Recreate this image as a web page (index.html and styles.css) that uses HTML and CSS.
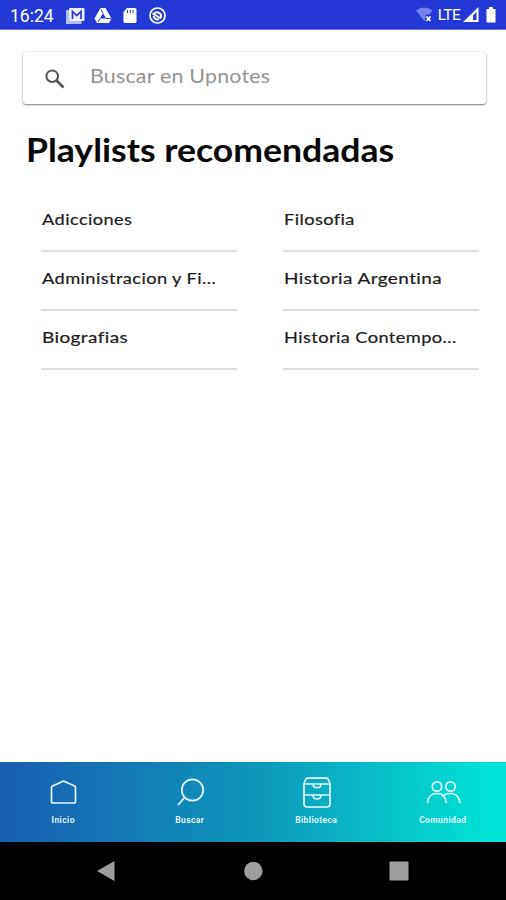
FILE: index.html
```html
<!DOCTYPE html>
<html lang="es">
<head>
<meta charset="utf-8">
<title>Upnotes</title>
<link rel="stylesheet" href="styles.css">
</head>
<body>
<div class="screen">
  <header class="status">
    <span class="clock">16:24</span>
    <svg class="status-left" width="104" height="20" viewBox="0 0 104 20">
      <path d="M2.500 4v12.500h14" fill="none" stroke="#b4bcf8" stroke-width="3"/>
      <rect x="4" y="2" width="15.500" height="13" rx="1" fill="#eef0ff"/>
      <path d="M7.500 13V5.500l4.300 4L16 5.500V13" fill="none" stroke="#2438d8" stroke-width="1.700"/>
      <path d="M35.500 2h5l6 10.500-2.500 4.500H32l-2.500-4.500z" fill="#fff"/>
      <path d="M38 7l3 5.500h-6z" fill="#2438d8"/>
      <path d="M38 7l-2-3.500M41 12.500h5M35 12.500l-2 3.500" stroke="#2438d8" stroke-width="1"/>
      <path d="M62 2h8q1.500 0 1.500 1.500v12q0 1.500-1.500 1.500H60q-1.500 0-1.500-1.500V6z" fill="#fff"/>
      <path d="M62.500 4v3M65.300 4v3M68.100 4v3" stroke="#2438d8" stroke-width="1"/>
      <circle cx="92.500" cy="9.500" r="7.500" fill="none" stroke="#fff" stroke-width="1.700"/>
      <path d="M89 7.500a4.200 4.200 0 0 1 7 4M88.500 10a4.200 4.200 0 0 0 5.500 3.300M87.500 7.500l8.500 5" fill="none" stroke="#fff" stroke-width="1.900"/>
    </svg>
    <svg class="wifi" width="20" height="18" viewBox="0 0 20 18">
      <path d="M1 4.500q8-6 16.500 0L9.300 15z" fill="#7882ec"/>
      <path d="M10.500 8.500h8V17h-8z" fill="#2438d8"/>
      <path d="M11.500 10.500l4 4.500m0-4.500l-4 4.500" stroke="#fff" stroke-width="1.700"/>
    </svg>
    <span class="lte">LTE</span>
    <svg class="power" width="36" height="18" viewBox="0 0 36 18">
      <path fill-rule="evenodd" d="M1 16L16.500 1v15zM11 14h3.500V6L11 9.500z" fill="#fff"/>
      <path d="M27 1h4v2h2.500v13.500h-9V3H27z" fill="#fff"/>
    </svg>
  </header>

  <main class="content">
    <div class="search">
      <svg width="20" height="20" viewBox="0 0 20 20" fill="none" stroke="#555">
        <circle cx="7.200" cy="7.200" r="5.800" stroke-width="2"/>
        <path d="M11.500 11.500l7 7" stroke-width="2.600"/>
      </svg>
      <span class="placeholder">Buscar en Upnotes</span>
    </div>
    <h1>Playlists recomendadas</h1>
    <div class="lists">
      <div class="item"><span>Adicciones</span></div>
      <div class="item"><span>Filosofia</span></div>
      <div class="item"><span>Administracion y Fi...</span></div>
      <div class="item"><span class="wide">Historia Argentina</span></div>
      <div class="item"><span class="wide">Biografias</span></div>
      <div class="item"><span>Historia Contempo...</span></div>
    </div>
  </main>

  <nav class="tabs">
    <div class="tab">
      <svg width="36" height="36" viewBox="0 0 36 36"><path d="M6.500 12.500Q6.500 11.600 7.500 11L18.500 6 29.500 11q1 .6 1 1.500V27q0 1-1 1h-22q-1 0-1-1z"/></svg>
      <span class="label">Inicio</span>
    </div>
    <div class="tab">
      <svg width="36" height="36" viewBox="0 0 36 36"><circle cx="20.500" cy="15" r="10.700"/><path d="M12.500 22.500L6.500 29.500"/></svg>
      <span class="label">Buscar</span>
    </div>
    <div class="tab">
      <svg width="36" height="36" viewBox="0 0 36 36"><path d="M9.500 3.200h19q1.500 0 2.500 2.500l1 3.300v20q0 3-3 3H9q-3 0-3-3V9l1-3.300q1-2.500 2.500-2.500zM6 9h26M15 9q0 3.700 4 3.700T23 9M6 20h26M15 20q0 4 4 4t4-4"/></svg>
      <span class="label">Biblioteca</span>
    </div>
    <div class="tab">
      <svg width="36" height="36" viewBox="0 0 36 36"><circle cx="12" cy="11.500" r="4.700"/><circle cx="25.500" cy="11.500" r="4.700"/><path d="M2.500 27.500q1-9 9.500-9t9 9M17.500 21q3-2.500 8-2.500 8 0 9.500 9"/></svg>
      <span class="label">Comunidad</span>
    </div>
  </nav>

  <footer class="system">
    <svg width="20" height="22" viewBox="0 0 20 22"><path d="M18.500 1v20L1 11z"/></svg>
    <svg width="20" height="22" viewBox="0 0 20 22"><circle cx="10.300" cy="11" r="9.200"/></svg>
    <svg width="20" height="22" viewBox="0 0 20 22"><rect x=".5" y="1.500" width="19" height="19" rx="1"/></svg>
  </footer>
</div>
</body>
</html>
```
FILE: styles.css
```css
* { box-sizing: border-box; }
body { margin: 0; background: #fff; font-family: Lato, sans-serif; }
.screen { width: 506px; height: 900px; display: flex; flex-direction: column; overflow: hidden; }

.status { height: 30px; background: #2438d8; color: #fff; display: flex; align-items: center; padding: 0 8px 0 10px; border-bottom: 1px solid #6672e4; font-family: Roboto, sans-serif; }
.clock { font-size: 17.5px; width: 55px; padding-top: 2px; }
.status-left { margin-top: 2px; }
.wifi { margin-left: auto; }
.lte { font-size: 15.5px; letter-spacing: -0.7px; margin: 1px 2px 0 3px; }

.content { flex: 1; padding: 22px 20px 0 23px; }
.search { height: 52px; display: flex; align-items: center; gap: 25px; padding-left: 22px; border-radius: 3px; box-shadow: 0 1px 2px rgba(0,0,0,.5), 0 0 3px rgba(0,0,0,.08); }
.search svg { margin-top: 1px; }
.placeholder { font-size: 19px; letter-spacing: 0.2px; color: #929292; line-height: 24px; margin-top: -4px; transform: scaleX(1.125); transform-origin: left; }
h1 { margin: 26px 0 0 3px; font-size: 32px; line-height: 40px; font-weight: 700; color: #080808; white-space: nowrap; transform: scaleX(1.112); transform-origin: left; }
.lists { margin: 23px 4px 0 18px; display: grid; grid-template-columns: 196px 196px; column-gap: 46px; }
.item { height: 59px; border-bottom: 2px solid #dedede; padding-top: 14px; font-size: 16px; line-height: 24px; color: #1c1c1c; white-space: nowrap; }
.item span { display: inline-block; margin-left: 1px; font-weight: 400; -webkit-text-stroke: 0.2px #1c1c1c; letter-spacing: 0.35px; transform: scaleX(1.14); transform-origin: left; }
.item .wide { transform: scaleX(1.185); }

.tabs { height: 80px; display: grid; grid-template-columns: repeat(4, 1fr); background: linear-gradient(90deg, #185db0, #0e96bc 50%, #00e2d6 97%); color: #e8fbff; }
.tab { display: flex; flex-direction: column; align-items: center; padding-top: 13px; }
.tab svg { fill: none; stroke: #e4f8ff; stroke-width: 1.7; stroke-linejoin: round; stroke-linecap: round; }
.label { font: 600 8.5px/12px Roboto, sans-serif; letter-spacing: 0.4px; margin-top: 3px; }

.system { height: 58px; background: #000; display: flex; justify-content: space-between; align-items: center; padding: 0 97px 0 96px; }
.system svg { fill: #9e9e9e; }
```
